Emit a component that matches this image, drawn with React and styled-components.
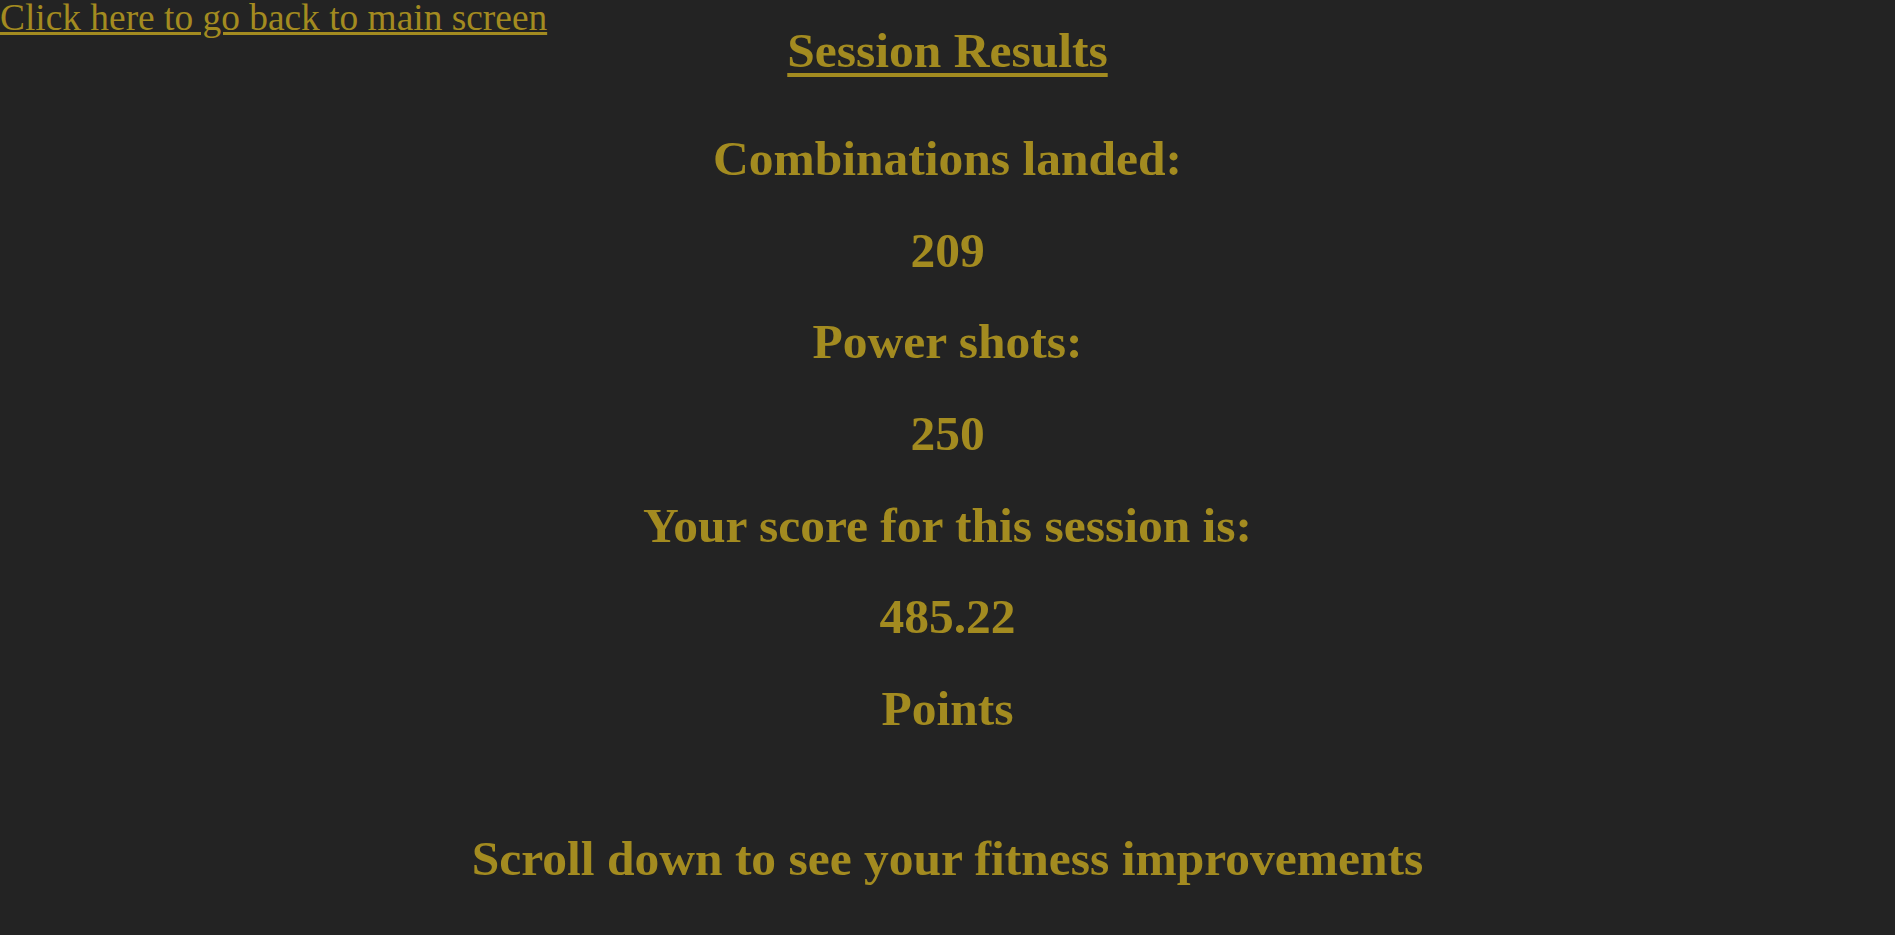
import React from "react";
import styled, { createGlobalStyle } from "styled-components";

const GOLD = "#a38b20";

const Global = createGlobalStyle`
  html, body {
    margin: 0;
    padding: 0;
    background: #232323;
  }
  body {
    font-family: "Liberation Serif", "Times New Roman", serif;
    color: ${GOLD};
  }
`;

const Page = styled.div`
  min-height: 935px;
  background: #232323;
`;

const BackLink = styled.a`
  display: block;
  width: max-content;
  font-size: 37.4px;
  line-height: 36px;
  color: ${GOLD};
  text-decoration: underline;
  text-decoration-thickness: 3px;
  cursor: pointer;
`;

const Title = styled.h1`
  margin: 0;
  text-align: center;
  font-size: 49.5px;
  font-weight: bold;
  line-height: 29.6px;
  text-decoration: underline;
  text-decoration-thickness: 4px;
  text-underline-offset: 6px;
`;

const Results = styled.div`
  margin-top: 47.3px;
  display: flex;
  flex-direction: column;
`;

const Line = styled.h2`
  margin: 0;
  margin-top: ${(p) => (p.$extra ? "58px" : "0")};
  text-align: center;
  font-size: 49.5px;
  font-weight: bold;
  line-height: 91.7px;
`;

const lines = [
  "Combinations landed:",
  "209",
  "Power shots:",
  "250",
  "Your score for this session is:",
  "485.22",
  "Points",
];

export default function App() {
  return (
    <Page>
      <Global />
      <BackLink href="#">Click here to go back to main screen</BackLink>
      <Title>Session Results</Title>
      <Results>
        {lines.map((t, i) => (
          <Line key={i}>{t}</Line>
        ))}
        <Line $extra>Scroll down to see your fitness improvements</Line>
      </Results>
    </Page>
  );
}
